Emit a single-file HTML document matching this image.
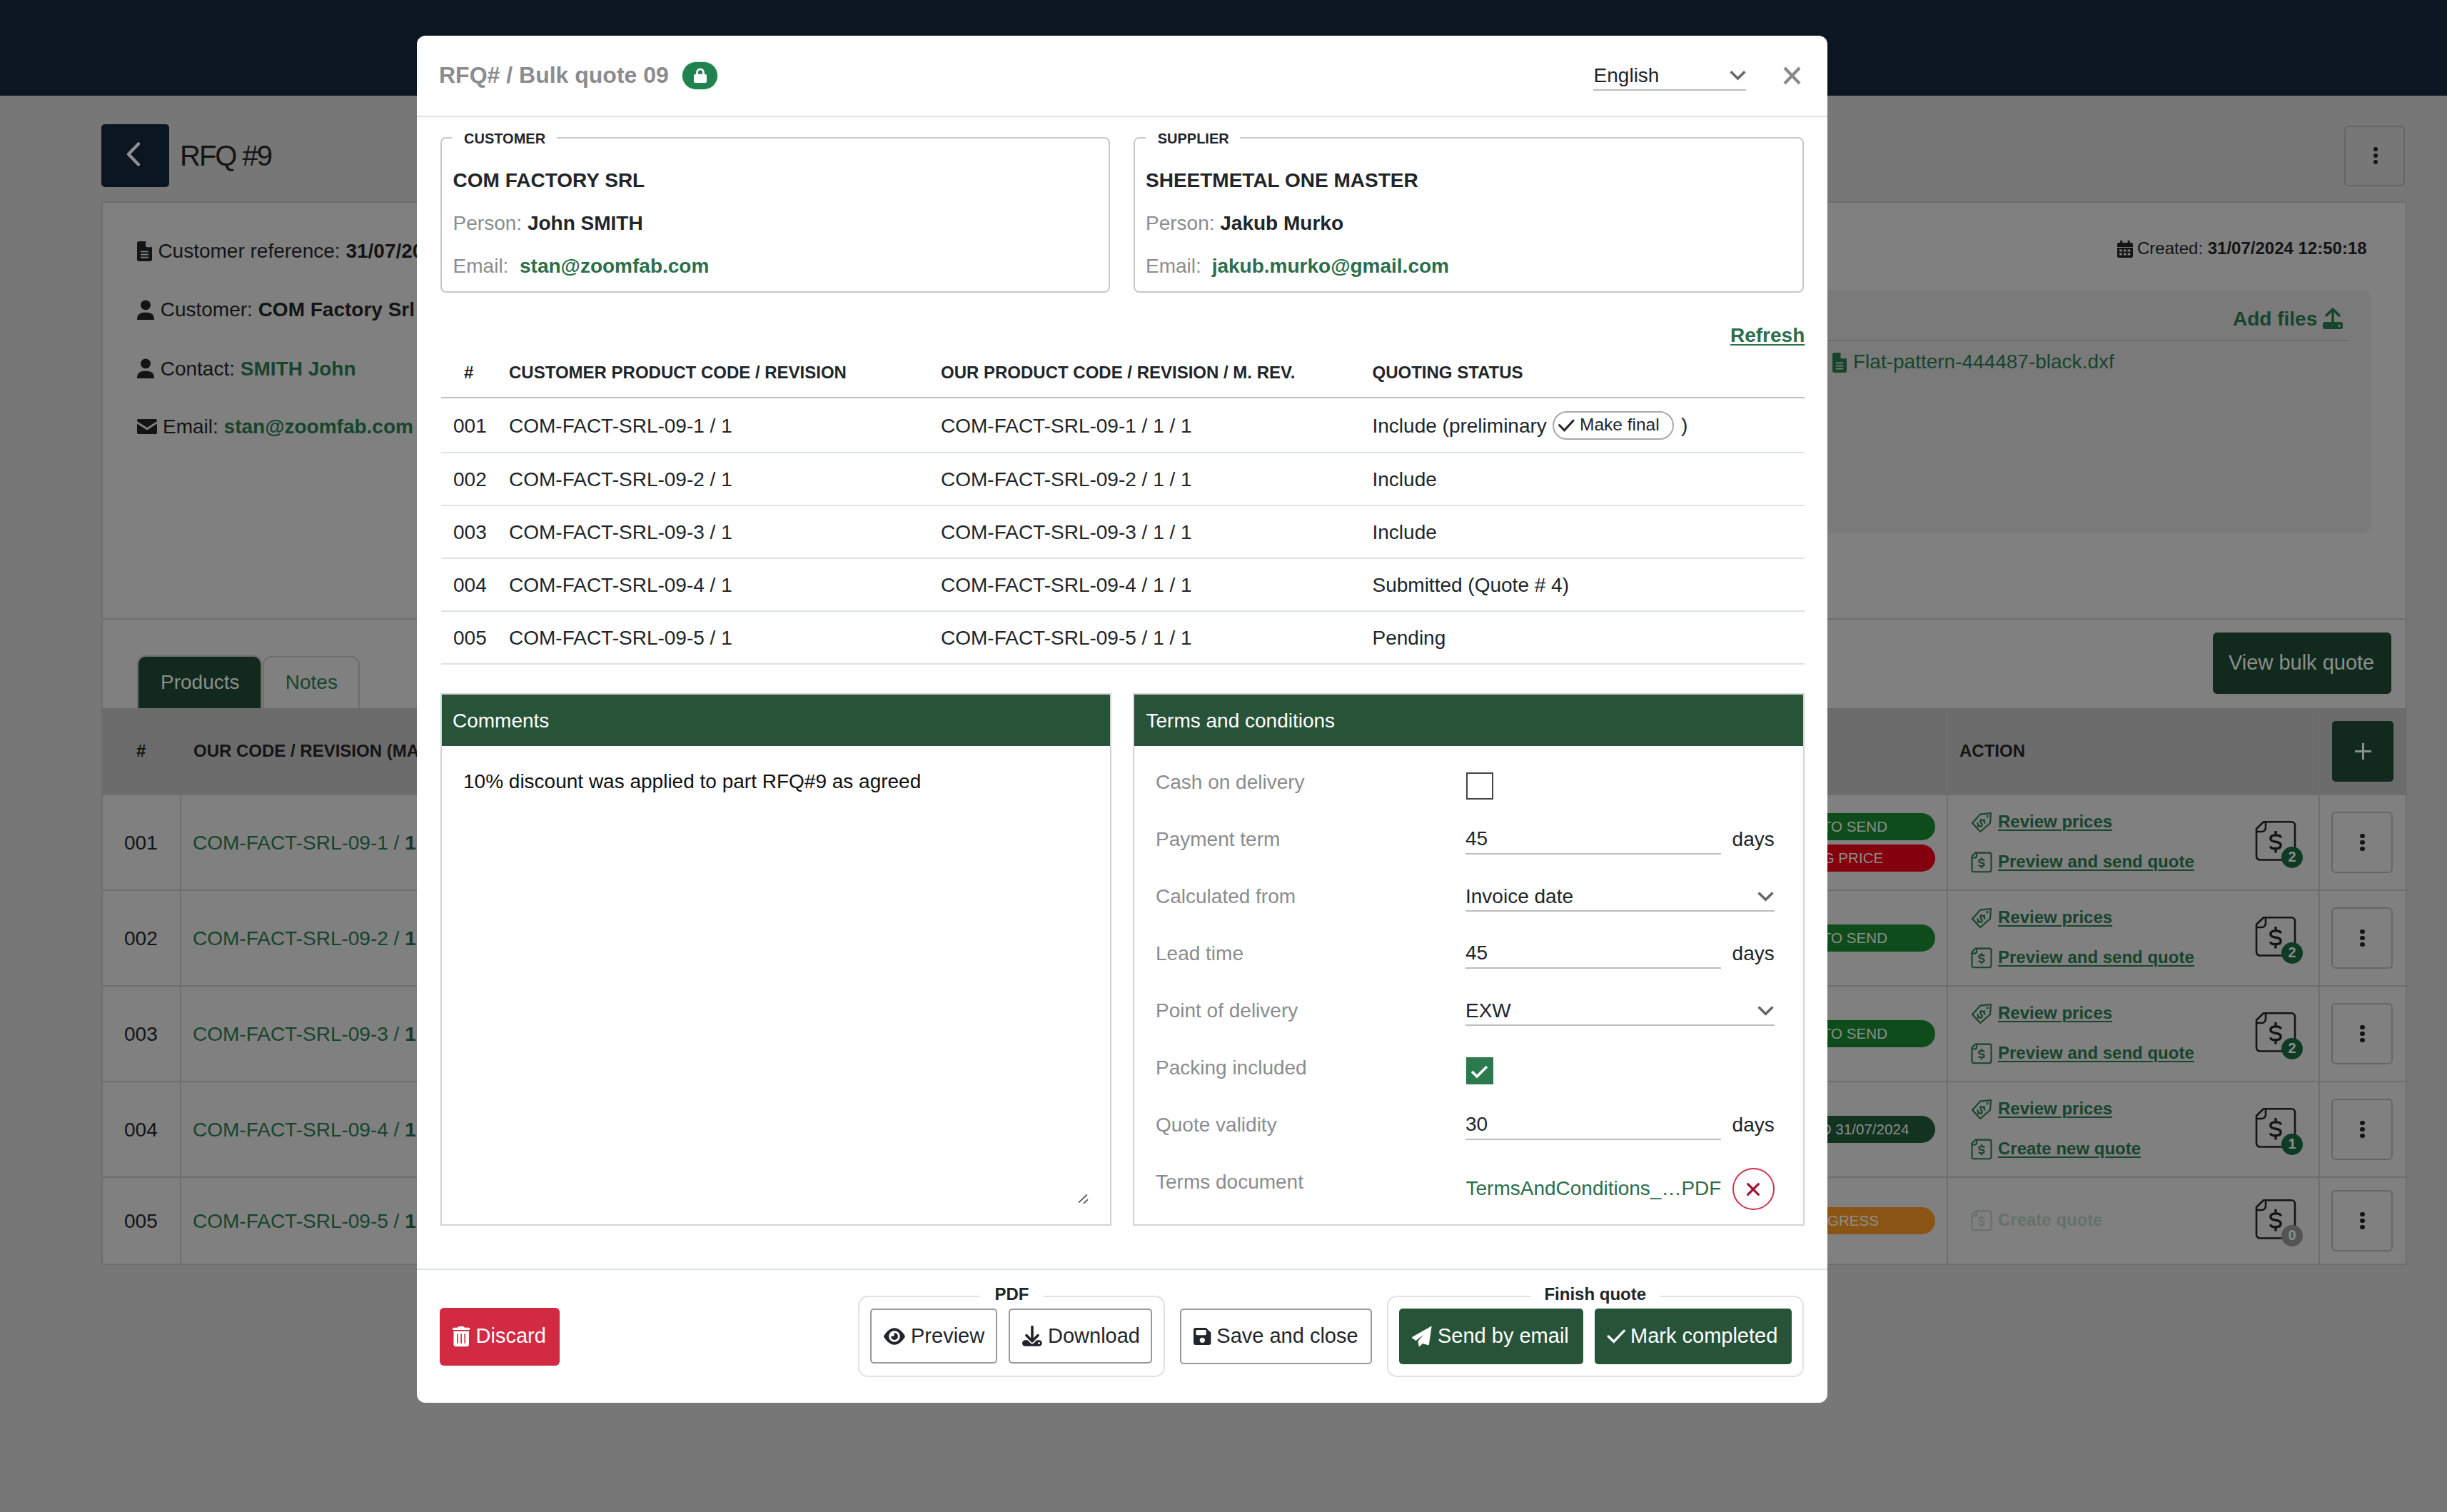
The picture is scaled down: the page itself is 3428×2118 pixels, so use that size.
<!DOCTYPE html><html><head><meta charset="utf-8"><title>RFQ Bulk quote</title><style>
html,body{margin:0;padding:0;}
body{width:3428px;height:2118px;overflow:hidden;position:relative;background:#777777;font-family:"Liberation Sans",sans-serif;}
.t{position:absolute;white-space:nowrap;line-height:1;}
.b{position:absolute;box-sizing:border-box;}
svg.b{overflow:visible;}
u{text-decoration:underline;text-underline-offset:3px;text-decoration-thickness:2px;}
</style></head><body>

<div class="b" style="left:0.0px;top:0.0px;width:3428.0px;height:134.0px;background:#0b1620;"></div>
<div class="b" style="left:142.0px;top:174.0px;width:95.0px;height:88.0px;background:#0b1620;border-radius:5px;"></div>
<svg class="b" style="left:172.0px;top:196.0px;width:30.0px;height:40.0px;" viewBox="0 0 30 40" preserveAspectRatio="none"><polyline points="22,5.5 8,20 22,34.5" fill="none" stroke="#8c8f93" stroke-width="4.5" stroke-linecap="round" stroke-linejoin="round"/></svg>
<div class="t" style="left:252.0px;top:197.9px;font-size:40px;color:#141414;letter-spacing:-2px;">RFQ #9</div>
<div class="b" style="left:3284.0px;top:175.5px;width:85.0px;height:85.5px;border:2px solid #666;border-radius:6px;"></div>
<div class="b" style="left:3324.5px;top:205.8px;width:6.4px;height:6.4px;background:#141414;border-radius:50%;"></div>
<div class="b" style="left:3324.5px;top:214.8px;width:6.4px;height:6.4px;background:#141414;border-radius:50%;"></div>
<div class="b" style="left:3324.5px;top:223.8px;width:6.4px;height:6.4px;background:#141414;border-radius:50%;"></div>
<div class="b" style="left:142.0px;top:282.0px;width:3230.0px;height:1490.0px;background:#808080;border:2px solid #6e6e6e;"></div>
<div class="b" style="left:143.0px;top:866.0px;width:3228.0px;height:2.0px;background:#6e6e6e;"></div>
<svg class="b" style="left:192.0px;top:338.0px;width:21.0px;height:28.0px;" viewBox="0 0 21 31" preserveAspectRatio="none"><path d="M0 3a3 3 0 0 1 3-3h9l9 9v19a3 3 0 0 1-3 3H3a3 3 0 0 1-3-3z" fill="#141414"/><path d="M12 0v7a2 2 0 0 0 2 2h7z" fill="#808080"/><rect x="5" y="15" width="11" height="2" fill="#808080"/><rect x="5" y="19.5" width="11" height="2" fill="#808080"/><rect x="5" y="24" width="11" height="2" fill="#808080"/></svg>
<div class="t" style="left:221.4px;top:338.2px;font-size:28px;color:#141414;">Customer reference: <b>31/07/2024 REF</b></div>
<svg class="b" style="left:192.0px;top:420.0px;width:24.0px;height:28.0px;" viewBox="0 0 24 28.5" preserveAspectRatio="none"><circle cx="12" cy="7.5" r="7" fill="#141414"/><path d="M0 27a9 9 0 0 1 9-9h6a9 9 0 0 1 9 9v1.5h-24z" fill="#141414"/></svg>
<div class="t" style="left:224.7px;top:420.2px;font-size:28px;color:#141414;">Customer: <b>COM Factory Srl</b></div>
<svg class="b" style="left:192.0px;top:502.0px;width:24.0px;height:28.0px;" viewBox="0 0 24 28.5" preserveAspectRatio="none"><circle cx="12" cy="7.5" r="7" fill="#141414"/><path d="M0 27a9 9 0 0 1 9-9h6a9 9 0 0 1 9 9v1.5h-24z" fill="#141414"/></svg>
<div class="t" style="left:224.7px;top:502.6px;font-size:28px;color:#141414;">Contact: <b style="color:#17442d">SMITH John</b></div>
<svg class="b" style="left:192.0px;top:587.0px;width:28.0px;height:21.0px;" viewBox="0 0 28 21" preserveAspectRatio="none"><path d="M2 0h24a2 2 0 0 1 2 2v1L14 12 0 3V2a2 2 0 0 1 2-2z" fill="#141414"/><path d="M0 6.5l14 9 14-9V19a2 2 0 0 1-2 2H2a2 2 0 0 1-2-2z" fill="#141414"/></svg>
<div class="t" style="left:228.0px;top:583.7px;font-size:28px;color:#141414;">Email: <b style="color:#17442d">stan@zoomfab.com</b></div>
<svg class="b" style="left:2966.0px;top:337.0px;width:22.0px;height:24.0px;" viewBox="0 0 21 24" preserveAspectRatio="none"><rect x="4" y="0" width="3" height="5" fill="#141414"/><rect x="14" y="0" width="3" height="5" fill="#141414"/><path d="M0 5a2 2 0 0 1 2-2h17a2 2 0 0 1 2 2v4H0z" fill="#141414"/><path d="M0 10h21v12a2 2 0 0 1-2 2H2a2 2 0 0 1-2-2z" fill="#141414"/><rect x="3.0" y="12.5" width="3.5" height="3" fill="#808080"/><rect x="3.0" y="17.5" width="3.5" height="3" fill="#808080"/><rect x="8.5" y="12.5" width="3.5" height="3" fill="#808080"/><rect x="8.5" y="17.5" width="3.5" height="3" fill="#808080"/><rect x="14.0" y="12.5" width="3.5" height="3" fill="#808080"/><rect x="14.0" y="17.5" width="3.5" height="3" fill="#808080"/></svg>
<div class="t" style="left:2994.0px;top:336.1px;font-size:24px;color:#141414;">Created: <b>31/07/2024 12:50:18</b></div>
<div class="b" style="left:2300.0px;top:406.0px;width:1021.0px;height:341.0px;background:#7a7a7a;border-radius:10px;"></div>
<div class="t" style="left:3128.0px;top:433.1px;font-size:28px;color:#17442d;font-weight:bold;">Add files</div>
<svg class="b" style="left:3254.0px;top:432.0px;width:28.0px;height:29.0px;" viewBox="0 0 28 29" preserveAspectRatio="none"><path d="M14 1 L5 10 M14 1 L23 10 M14 1 V21" stroke="#17442d" stroke-width="3.5" fill="none" stroke-linecap="round" stroke-linejoin="round"/><path d="M0 22a3 3 0 0 1 3-3h22a3 3 0 0 1 3 3v4a3 3 0 0 1-3 3H3a3 3 0 0 1-3-3z" fill="#17442d"/><circle cx="23" cy="24.5" r="1.8" fill="#7a7a7a"/></svg>
<div class="b" style="left:2340.0px;top:476.0px;width:951.0px;height:2.0px;background:#6b6b6b;"></div>
<svg class="b" style="left:2567.0px;top:494.0px;width:20.0px;height:28.0px;" viewBox="0 0 21 31" preserveAspectRatio="none"><path d="M0 3a3 3 0 0 1 3-3h9l9 9v19a3 3 0 0 1-3 3H3a3 3 0 0 1-3-3z" fill="#17442d"/><path d="M12 0v7a2 2 0 0 0 2 2h7z" fill="#7a7a7a"/><rect x="5" y="15" width="11" height="2" fill="#7a7a7a"/><rect x="5" y="19.5" width="11" height="2" fill="#7a7a7a"/><rect x="5" y="24" width="11" height="2" fill="#7a7a7a"/></svg>
<div class="t" style="left:2596.0px;top:492.6px;font-size:28px;color:#17442d;">Flat-pattern-444487-black.dxf</div>
<div class="b" style="left:192.0px;top:918.0px;width:175.0px;height:74.0px;border:2px solid #6e6e6e;border-bottom:none;border-radius:12px 12px 0 0;"></div>
<div class="b" style="left:194.0px;top:920.0px;width:171.0px;height:72.0px;background:#12291e;border-radius:10px 10px 0 0;"></div>
<div class="t" style="left:225.0px;top:942.3px;font-size:28px;color:#8a8f8c;">Products</div>
<div class="b" style="left:368.0px;top:918.6px;width:136.0px;height:73.4px;border:2px solid #6e6e6e;border-bottom:none;border-radius:12px 12px 0 0;"></div>
<div class="t" style="left:399.8px;top:942.3px;font-size:28px;color:#17442d;">Notes</div>
<div class="b" style="left:143.0px;top:992.0px;width:3228.0px;height:121.0px;background:#6c6c6c;"></div>
<div class="b" style="left:143.0px;top:1112.0px;width:3228.0px;height:2.0px;background:#6e6e6e;"></div>
<div class="b" style="left:143.0px;top:1246.0px;width:3228.0px;height:2.0px;background:#6e6e6e;"></div>
<div class="b" style="left:143.0px;top:1380.0px;width:3228.0px;height:2.0px;background:#6e6e6e;"></div>
<div class="b" style="left:143.0px;top:1514.0px;width:3228.0px;height:2.0px;background:#6e6e6e;"></div>
<div class="b" style="left:143.0px;top:1648.0px;width:3228.0px;height:2.0px;background:#6e6e6e;"></div>
<div class="b" style="left:252.0px;top:992.0px;width:2.0px;height:779.0px;background:#6e6e6e;"></div>
<div class="b" style="left:2727.0px;top:992.0px;width:2.0px;height:779.0px;background:#6e6e6e;"></div>
<div class="b" style="left:3248.0px;top:992.0px;width:2.0px;height:779.0px;background:#6e6e6e;"></div>
<div class="t" style="left:191.0px;top:1040.0px;font-size:24px;color:#141414;font-weight:bold;">#</div>
<div class="t" style="left:271.0px;top:1040.0px;font-size:24px;color:#141414;font-weight:bold;">OUR CODE / REVISION (MACHINE REVISION)</div>
<div class="t" style="left:2745.0px;top:1040.0px;font-size:24px;color:#141414;font-weight:bold;">ACTION</div>
<div class="b" style="left:3267.0px;top:1010.0px;width:86.0px;height:85.0px;background:#12291e;border-radius:5px;"></div>
<div class="b" style="left:3298.5px;top:1050.5px;width:23.0px;height:3.0px;background:#8a8f8c;"></div>
<div class="b" style="left:3308.5px;top:1040.5px;width:3.0px;height:23.0px;background:#8a8f8c;"></div>
<div class="b" style="left:3100.0px;top:886.0px;width:250.0px;height:86.0px;background:#12291e;border-radius:6px;"></div>
<div class="t" style="left:3122.0px;top:913.8px;font-size:29px;color:#8a8f8c;">View bulk quote</div>
<div class="t" style="left:174.0px;top:1166.7px;font-size:28px;color:#141414;">001</div>
<div class="t" style="left:270.0px;top:1166.7px;font-size:28px;color:#17442d;">COM-FACT-SRL-09-1 / <b style="color:#173a27">1</b></div>
<div class="b" style="left:2410.0px;top:1139.0px;width:301.0px;height:38.0px;background:#0f4c1b;border-radius:19px;"></div>
<div class="t" style="left:2410px;width:301px;top:1147.5px;font-size:20.6px;color:#8a8f8c;text-align:center;">READY TO SEND</div>
<div class="b" style="left:2410.0px;top:1183.0px;width:301.0px;height:38.0px;background:#85000f;border-radius:19px;"></div>
<div class="t" style="left:2410px;width:301px;top:1191.5px;font-size:20.6px;color:#8a8f8c;text-align:center;">MISSING PRICE</div>
<svg class="b" style="left:2762.0px;top:1138.0px;width:28.0px;height:28.0px;" viewBox="0 0 28 28" preserveAspectRatio="none"><path d="M1 15 L12.2 2.6 L27 1 L26 15 L12.2 27 Z" fill="none" stroke="#17442d" stroke-width="2.1" stroke-linejoin="round"/><circle cx="22.1" cy="5.6" r="1.3" fill="none" stroke="#17442d" stroke-width="1.1"/><g transform="rotate(45 13.5 15)"><path d="M17.02 12.12 C17.02 10.81 15.26 10.35 13.50 10.35 C11.38 10.35 9.97 11.05 9.97 12.68 C9.97 14.30 11.74 14.77 13.50 15.00 C15.26 15.23 17.02 15.70 17.02 17.32 C17.02 18.95 15.62 19.65 13.50 19.65 C11.74 19.65 9.97 19.19 9.97 17.88 M13.50 7.50 V10.35 M13.50 19.65 V22.50" fill="none" stroke="#17442d" stroke-width="2.1"/></g></svg>
<div class="t" style="left:2799.0px;top:1139.0px;font-size:24px;color:#17442d;font-weight:bold;"><u>Review prices</u></div>
<svg class="b" style="left:2762.0px;top:1194.0px;width:28.0px;height:28.0px;" viewBox="0 0 56 56" preserveAspectRatio="none"><path d="M11 1.2 H50 a5 5 0 0 1 5 5 V49.5 a5 5 0 0 1 -5 5 H6 a5 5 0 0 1 -5 -5 V11 Z" fill="none" stroke="#17442d" stroke-width="4.2" stroke-linejoin="round"/><path d="M1.5 15 H8.5 a5.5 5.5 0 0 0 5.5 -5.5 V1.5" fill="none" stroke="#17442d" stroke-width="4.2"/><path d="M35.17 23.44 C35.17 20.79 31.58 19.84 28.00 19.84 C23.70 19.84 20.83 21.26 20.83 24.57 C20.83 27.88 24.42 28.83 28.00 29.30 C31.58 29.77 35.17 30.72 35.17 34.03 C35.17 37.34 32.30 38.76 28.00 38.76 C24.42 38.76 20.83 37.81 20.83 35.16 M28.00 14.05 V19.84 M28.00 38.76 V44.55" fill="none" stroke="#17442d" stroke-width="4.4" stroke-linecap="butt"/></svg>
<div class="t" style="left:2799.0px;top:1194.5px;font-size:24px;color:#17442d;font-weight:bold;"><u>Preview and send quote</u></div>
<svg class="b" style="left:3160.0px;top:1150.0px;width:56.0px;height:56.0px;" viewBox="0 0 56 56" preserveAspectRatio="none"><path d="M11 1.2 H50 a5 5 0 0 1 5 5 V49.5 a5 5 0 0 1 -5 5 H6 a5 5 0 0 1 -5 -5 V11 Z" fill="none" stroke="#141414" stroke-width="2.6" stroke-linejoin="round"/><path d="M1.5 15 H8.5 a5.5 5.5 0 0 0 5.5 -5.5 V1.5" fill="none" stroke="#141414" stroke-width="2.6"/><path d="M35.17 23.44 C35.17 20.79 31.58 19.84 28.00 19.84 C23.70 19.84 20.83 21.26 20.83 24.57 C20.83 27.88 24.42 28.83 28.00 29.30 C31.58 29.77 35.17 30.72 35.17 34.03 C35.17 37.34 32.30 38.76 28.00 38.76 C24.42 38.76 20.83 37.81 20.83 35.16 M28.00 14.05 V19.84 M28.00 38.76 V44.55" fill="none" stroke="#141414" stroke-width="3.4" stroke-linecap="butt"/></svg>
<div class="b" style="left:3196.0px;top:1186.0px;width:30.0px;height:30.0px;background:#0f3a24;border-radius:50%;"></div>
<div class="t" style="left:3196px;width:30px;top:1190.0px;font-size:20px;font-weight:bold;color:#8a8f8c;text-align:center;">2</div>
<div class="b" style="left:3266.0px;top:1136.5px;width:86.0px;height:86.0px;border:2px solid #666;border-radius:6px;"></div>
<div class="b" style="left:3306.2px;top:1167.8px;width:6.4px;height:6.4px;background:#141414;border-radius:50%;"></div>
<div class="b" style="left:3306.2px;top:1176.8px;width:6.4px;height:6.4px;background:#141414;border-radius:50%;"></div>
<div class="b" style="left:3306.2px;top:1185.8px;width:6.4px;height:6.4px;background:#141414;border-radius:50%;"></div>
<div class="t" style="left:174.0px;top:1300.7px;font-size:28px;color:#141414;">002</div>
<div class="t" style="left:270.0px;top:1300.7px;font-size:28px;color:#17442d;">COM-FACT-SRL-09-2 / <b style="color:#173a27">1</b></div>
<div class="b" style="left:2410.0px;top:1295.0px;width:301.0px;height:38.0px;background:#0f4c1b;border-radius:19px;"></div>
<div class="t" style="left:2410px;width:301px;top:1303.5px;font-size:20.6px;color:#8a8f8c;text-align:center;">READY TO SEND</div>
<svg class="b" style="left:2762.0px;top:1272.0px;width:28.0px;height:28.0px;" viewBox="0 0 28 28" preserveAspectRatio="none"><path d="M1 15 L12.2 2.6 L27 1 L26 15 L12.2 27 Z" fill="none" stroke="#17442d" stroke-width="2.1" stroke-linejoin="round"/><circle cx="22.1" cy="5.6" r="1.3" fill="none" stroke="#17442d" stroke-width="1.1"/><g transform="rotate(45 13.5 15)"><path d="M17.02 12.12 C17.02 10.81 15.26 10.35 13.50 10.35 C11.38 10.35 9.97 11.05 9.97 12.68 C9.97 14.30 11.74 14.77 13.50 15.00 C15.26 15.23 17.02 15.70 17.02 17.32 C17.02 18.95 15.62 19.65 13.50 19.65 C11.74 19.65 9.97 19.19 9.97 17.88 M13.50 7.50 V10.35 M13.50 19.65 V22.50" fill="none" stroke="#17442d" stroke-width="2.1"/></g></svg>
<div class="t" style="left:2799.0px;top:1273.0px;font-size:24px;color:#17442d;font-weight:bold;"><u>Review prices</u></div>
<svg class="b" style="left:2762.0px;top:1328.0px;width:28.0px;height:28.0px;" viewBox="0 0 56 56" preserveAspectRatio="none"><path d="M11 1.2 H50 a5 5 0 0 1 5 5 V49.5 a5 5 0 0 1 -5 5 H6 a5 5 0 0 1 -5 -5 V11 Z" fill="none" stroke="#17442d" stroke-width="4.2" stroke-linejoin="round"/><path d="M1.5 15 H8.5 a5.5 5.5 0 0 0 5.5 -5.5 V1.5" fill="none" stroke="#17442d" stroke-width="4.2"/><path d="M35.17 23.44 C35.17 20.79 31.58 19.84 28.00 19.84 C23.70 19.84 20.83 21.26 20.83 24.57 C20.83 27.88 24.42 28.83 28.00 29.30 C31.58 29.77 35.17 30.72 35.17 34.03 C35.17 37.34 32.30 38.76 28.00 38.76 C24.42 38.76 20.83 37.81 20.83 35.16 M28.00 14.05 V19.84 M28.00 38.76 V44.55" fill="none" stroke="#17442d" stroke-width="4.4" stroke-linecap="butt"/></svg>
<div class="t" style="left:2799.0px;top:1328.5px;font-size:24px;color:#17442d;font-weight:bold;"><u>Preview and send quote</u></div>
<svg class="b" style="left:3160.0px;top:1284.0px;width:56.0px;height:56.0px;" viewBox="0 0 56 56" preserveAspectRatio="none"><path d="M11 1.2 H50 a5 5 0 0 1 5 5 V49.5 a5 5 0 0 1 -5 5 H6 a5 5 0 0 1 -5 -5 V11 Z" fill="none" stroke="#141414" stroke-width="2.6" stroke-linejoin="round"/><path d="M1.5 15 H8.5 a5.5 5.5 0 0 0 5.5 -5.5 V1.5" fill="none" stroke="#141414" stroke-width="2.6"/><path d="M35.17 23.44 C35.17 20.79 31.58 19.84 28.00 19.84 C23.70 19.84 20.83 21.26 20.83 24.57 C20.83 27.88 24.42 28.83 28.00 29.30 C31.58 29.77 35.17 30.72 35.17 34.03 C35.17 37.34 32.30 38.76 28.00 38.76 C24.42 38.76 20.83 37.81 20.83 35.16 M28.00 14.05 V19.84 M28.00 38.76 V44.55" fill="none" stroke="#141414" stroke-width="3.4" stroke-linecap="butt"/></svg>
<div class="b" style="left:3196.0px;top:1320.0px;width:30.0px;height:30.0px;background:#0f3a24;border-radius:50%;"></div>
<div class="t" style="left:3196px;width:30px;top:1324.0px;font-size:20px;font-weight:bold;color:#8a8f8c;text-align:center;">2</div>
<div class="b" style="left:3266.0px;top:1270.5px;width:86.0px;height:86.0px;border:2px solid #666;border-radius:6px;"></div>
<div class="b" style="left:3306.2px;top:1301.8px;width:6.4px;height:6.4px;background:#141414;border-radius:50%;"></div>
<div class="b" style="left:3306.2px;top:1310.8px;width:6.4px;height:6.4px;background:#141414;border-radius:50%;"></div>
<div class="b" style="left:3306.2px;top:1319.8px;width:6.4px;height:6.4px;background:#141414;border-radius:50%;"></div>
<div class="t" style="left:174.0px;top:1434.7px;font-size:28px;color:#141414;">003</div>
<div class="t" style="left:270.0px;top:1434.7px;font-size:28px;color:#17442d;">COM-FACT-SRL-09-3 / <b style="color:#173a27">1</b></div>
<div class="b" style="left:2410.0px;top:1429.0px;width:301.0px;height:38.0px;background:#0f4c1b;border-radius:19px;"></div>
<div class="t" style="left:2410px;width:301px;top:1437.5px;font-size:20.6px;color:#8a8f8c;text-align:center;">READY TO SEND</div>
<svg class="b" style="left:2762.0px;top:1406.0px;width:28.0px;height:28.0px;" viewBox="0 0 28 28" preserveAspectRatio="none"><path d="M1 15 L12.2 2.6 L27 1 L26 15 L12.2 27 Z" fill="none" stroke="#17442d" stroke-width="2.1" stroke-linejoin="round"/><circle cx="22.1" cy="5.6" r="1.3" fill="none" stroke="#17442d" stroke-width="1.1"/><g transform="rotate(45 13.5 15)"><path d="M17.02 12.12 C17.02 10.81 15.26 10.35 13.50 10.35 C11.38 10.35 9.97 11.05 9.97 12.68 C9.97 14.30 11.74 14.77 13.50 15.00 C15.26 15.23 17.02 15.70 17.02 17.32 C17.02 18.95 15.62 19.65 13.50 19.65 C11.74 19.65 9.97 19.19 9.97 17.88 M13.50 7.50 V10.35 M13.50 19.65 V22.50" fill="none" stroke="#17442d" stroke-width="2.1"/></g></svg>
<div class="t" style="left:2799.0px;top:1407.0px;font-size:24px;color:#17442d;font-weight:bold;"><u>Review prices</u></div>
<svg class="b" style="left:2762.0px;top:1462.0px;width:28.0px;height:28.0px;" viewBox="0 0 56 56" preserveAspectRatio="none"><path d="M11 1.2 H50 a5 5 0 0 1 5 5 V49.5 a5 5 0 0 1 -5 5 H6 a5 5 0 0 1 -5 -5 V11 Z" fill="none" stroke="#17442d" stroke-width="4.2" stroke-linejoin="round"/><path d="M1.5 15 H8.5 a5.5 5.5 0 0 0 5.5 -5.5 V1.5" fill="none" stroke="#17442d" stroke-width="4.2"/><path d="M35.17 23.44 C35.17 20.79 31.58 19.84 28.00 19.84 C23.70 19.84 20.83 21.26 20.83 24.57 C20.83 27.88 24.42 28.83 28.00 29.30 C31.58 29.77 35.17 30.72 35.17 34.03 C35.17 37.34 32.30 38.76 28.00 38.76 C24.42 38.76 20.83 37.81 20.83 35.16 M28.00 14.05 V19.84 M28.00 38.76 V44.55" fill="none" stroke="#17442d" stroke-width="4.4" stroke-linecap="butt"/></svg>
<div class="t" style="left:2799.0px;top:1462.5px;font-size:24px;color:#17442d;font-weight:bold;"><u>Preview and send quote</u></div>
<svg class="b" style="left:3160.0px;top:1418.0px;width:56.0px;height:56.0px;" viewBox="0 0 56 56" preserveAspectRatio="none"><path d="M11 1.2 H50 a5 5 0 0 1 5 5 V49.5 a5 5 0 0 1 -5 5 H6 a5 5 0 0 1 -5 -5 V11 Z" fill="none" stroke="#141414" stroke-width="2.6" stroke-linejoin="round"/><path d="M1.5 15 H8.5 a5.5 5.5 0 0 0 5.5 -5.5 V1.5" fill="none" stroke="#141414" stroke-width="2.6"/><path d="M35.17 23.44 C35.17 20.79 31.58 19.84 28.00 19.84 C23.70 19.84 20.83 21.26 20.83 24.57 C20.83 27.88 24.42 28.83 28.00 29.30 C31.58 29.77 35.17 30.72 35.17 34.03 C35.17 37.34 32.30 38.76 28.00 38.76 C24.42 38.76 20.83 37.81 20.83 35.16 M28.00 14.05 V19.84 M28.00 38.76 V44.55" fill="none" stroke="#141414" stroke-width="3.4" stroke-linecap="butt"/></svg>
<div class="b" style="left:3196.0px;top:1454.0px;width:30.0px;height:30.0px;background:#0f3a24;border-radius:50%;"></div>
<div class="t" style="left:3196px;width:30px;top:1458.0px;font-size:20px;font-weight:bold;color:#8a8f8c;text-align:center;">2</div>
<div class="b" style="left:3266.0px;top:1404.5px;width:86.0px;height:86.0px;border:2px solid #666;border-radius:6px;"></div>
<div class="b" style="left:3306.2px;top:1435.8px;width:6.4px;height:6.4px;background:#141414;border-radius:50%;"></div>
<div class="b" style="left:3306.2px;top:1444.8px;width:6.4px;height:6.4px;background:#141414;border-radius:50%;"></div>
<div class="b" style="left:3306.2px;top:1453.8px;width:6.4px;height:6.4px;background:#141414;border-radius:50%;"></div>
<div class="t" style="left:174.0px;top:1568.7px;font-size:28px;color:#141414;">004</div>
<div class="t" style="left:270.0px;top:1568.7px;font-size:28px;color:#17442d;">COM-FACT-SRL-09-4 / <b style="color:#173a27">1</b></div>
<div class="b" style="left:2410.0px;top:1563.0px;width:301.0px;height:38.0px;background:#133321;border-radius:19px;"></div>
<div class="t" style="left:2410px;width:301px;top:1571.5px;font-size:20.6px;color:#8a8f8c;text-align:center;">SUBMITTED 31/07/2024</div>
<svg class="b" style="left:2762.0px;top:1540.0px;width:28.0px;height:28.0px;" viewBox="0 0 28 28" preserveAspectRatio="none"><path d="M1 15 L12.2 2.6 L27 1 L26 15 L12.2 27 Z" fill="none" stroke="#17442d" stroke-width="2.1" stroke-linejoin="round"/><circle cx="22.1" cy="5.6" r="1.3" fill="none" stroke="#17442d" stroke-width="1.1"/><g transform="rotate(45 13.5 15)"><path d="M17.02 12.12 C17.02 10.81 15.26 10.35 13.50 10.35 C11.38 10.35 9.97 11.05 9.97 12.68 C9.97 14.30 11.74 14.77 13.50 15.00 C15.26 15.23 17.02 15.70 17.02 17.32 C17.02 18.95 15.62 19.65 13.50 19.65 C11.74 19.65 9.97 19.19 9.97 17.88 M13.50 7.50 V10.35 M13.50 19.65 V22.50" fill="none" stroke="#17442d" stroke-width="2.1"/></g></svg>
<div class="t" style="left:2799.0px;top:1541.0px;font-size:24px;color:#17442d;font-weight:bold;"><u>Review prices</u></div>
<svg class="b" style="left:2762.0px;top:1596.0px;width:28.0px;height:28.0px;" viewBox="0 0 56 56" preserveAspectRatio="none"><path d="M11 1.2 H50 a5 5 0 0 1 5 5 V49.5 a5 5 0 0 1 -5 5 H6 a5 5 0 0 1 -5 -5 V11 Z" fill="none" stroke="#17442d" stroke-width="4.2" stroke-linejoin="round"/><path d="M1.5 15 H8.5 a5.5 5.5 0 0 0 5.5 -5.5 V1.5" fill="none" stroke="#17442d" stroke-width="4.2"/><path d="M35.17 23.44 C35.17 20.79 31.58 19.84 28.00 19.84 C23.70 19.84 20.83 21.26 20.83 24.57 C20.83 27.88 24.42 28.83 28.00 29.30 C31.58 29.77 35.17 30.72 35.17 34.03 C35.17 37.34 32.30 38.76 28.00 38.76 C24.42 38.76 20.83 37.81 20.83 35.16 M28.00 14.05 V19.84 M28.00 38.76 V44.55" fill="none" stroke="#17442d" stroke-width="4.4" stroke-linecap="butt"/></svg>
<div class="t" style="left:2799.0px;top:1596.5px;font-size:24px;color:#17442d;font-weight:bold;"><u>Create new quote</u></div>
<svg class="b" style="left:3160.0px;top:1552.0px;width:56.0px;height:56.0px;" viewBox="0 0 56 56" preserveAspectRatio="none"><path d="M11 1.2 H50 a5 5 0 0 1 5 5 V49.5 a5 5 0 0 1 -5 5 H6 a5 5 0 0 1 -5 -5 V11 Z" fill="none" stroke="#141414" stroke-width="2.6" stroke-linejoin="round"/><path d="M1.5 15 H8.5 a5.5 5.5 0 0 0 5.5 -5.5 V1.5" fill="none" stroke="#141414" stroke-width="2.6"/><path d="M35.17 23.44 C35.17 20.79 31.58 19.84 28.00 19.84 C23.70 19.84 20.83 21.26 20.83 24.57 C20.83 27.88 24.42 28.83 28.00 29.30 C31.58 29.77 35.17 30.72 35.17 34.03 C35.17 37.34 32.30 38.76 28.00 38.76 C24.42 38.76 20.83 37.81 20.83 35.16 M28.00 14.05 V19.84 M28.00 38.76 V44.55" fill="none" stroke="#141414" stroke-width="3.4" stroke-linecap="butt"/></svg>
<div class="b" style="left:3196.0px;top:1588.0px;width:30.0px;height:30.0px;background:#0f3a24;border-radius:50%;"></div>
<div class="t" style="left:3196px;width:30px;top:1592.0px;font-size:20px;font-weight:bold;color:#8a8f8c;text-align:center;">1</div>
<div class="b" style="left:3266.0px;top:1538.5px;width:86.0px;height:86.0px;border:2px solid #666;border-radius:6px;"></div>
<div class="b" style="left:3306.2px;top:1569.8px;width:6.4px;height:6.4px;background:#141414;border-radius:50%;"></div>
<div class="b" style="left:3306.2px;top:1578.8px;width:6.4px;height:6.4px;background:#141414;border-radius:50%;"></div>
<div class="b" style="left:3306.2px;top:1587.8px;width:6.4px;height:6.4px;background:#141414;border-radius:50%;"></div>
<div class="t" style="left:174.0px;top:1696.7px;font-size:28px;color:#141414;">005</div>
<div class="t" style="left:270.0px;top:1696.7px;font-size:28px;color:#17442d;">COM-FACT-SRL-09-5 / <b style="color:#173a27">1</b></div>
<div class="b" style="left:2410.0px;top:1691.0px;width:301.0px;height:38.0px;background:#8a5514;border-radius:19px;"></div>
<div class="t" style="left:2410px;width:301px;top:1699.5px;font-size:20.6px;color:#8a8f8c;text-align:center;">IN PROGRESS</div>
<svg class="b" style="left:2762.0px;top:1696.0px;width:28.0px;height:28.0px;" viewBox="0 0 56 56" preserveAspectRatio="none"><path d="M11 1.2 H50 a5 5 0 0 1 5 5 V49.5 a5 5 0 0 1 -5 5 H6 a5 5 0 0 1 -5 -5 V11 Z" fill="none" stroke="#65716b" stroke-width="4.2" stroke-linejoin="round"/><path d="M1.5 15 H8.5 a5.5 5.5 0 0 0 5.5 -5.5 V1.5" fill="none" stroke="#65716b" stroke-width="4.2"/><path d="M35.17 23.44 C35.17 20.79 31.58 19.84 28.00 19.84 C23.70 19.84 20.83 21.26 20.83 24.57 C20.83 27.88 24.42 28.83 28.00 29.30 C31.58 29.77 35.17 30.72 35.17 34.03 C35.17 37.34 32.30 38.76 28.00 38.76 C24.42 38.76 20.83 37.81 20.83 35.16 M28.00 14.05 V19.84 M28.00 38.76 V44.55" fill="none" stroke="#65716b" stroke-width="4.4" stroke-linecap="butt"/></svg>
<div class="t" style="left:2799.0px;top:1697.0px;font-size:24px;color:#65716b;font-weight:bold;">Create quote</div>
<svg class="b" style="left:3160.0px;top:1680.0px;width:56.0px;height:56.0px;" viewBox="0 0 56 56" preserveAspectRatio="none"><path d="M11 1.2 H50 a5 5 0 0 1 5 5 V49.5 a5 5 0 0 1 -5 5 H6 a5 5 0 0 1 -5 -5 V11 Z" fill="none" stroke="#141414" stroke-width="2.6" stroke-linejoin="round"/><path d="M1.5 15 H8.5 a5.5 5.5 0 0 0 5.5 -5.5 V1.5" fill="none" stroke="#141414" stroke-width="2.6"/><path d="M35.17 23.44 C35.17 20.79 31.58 19.84 28.00 19.84 C23.70 19.84 20.83 21.26 20.83 24.57 C20.83 27.88 24.42 28.83 28.00 29.30 C31.58 29.77 35.17 30.72 35.17 34.03 C35.17 37.34 32.30 38.76 28.00 38.76 C24.42 38.76 20.83 37.81 20.83 35.16 M28.00 14.05 V19.84 M28.00 38.76 V44.55" fill="none" stroke="#141414" stroke-width="3.4" stroke-linecap="butt"/></svg>
<div class="b" style="left:3196.0px;top:1716.0px;width:30.0px;height:30.0px;background:#545454;border-radius:50%;"></div>
<div class="t" style="left:3196px;width:30px;top:1720.0px;font-size:20px;font-weight:bold;color:#8a8f8c;text-align:center;">0</div>
<div class="b" style="left:3266.0px;top:1666.5px;width:86.0px;height:86.0px;border:2px solid #666;border-radius:6px;"></div>
<div class="b" style="left:3306.2px;top:1697.8px;width:6.4px;height:6.4px;background:#141414;border-radius:50%;"></div>
<div class="b" style="left:3306.2px;top:1706.8px;width:6.4px;height:6.4px;background:#141414;border-radius:50%;"></div>
<div class="b" style="left:3306.2px;top:1715.8px;width:6.4px;height:6.4px;background:#141414;border-radius:50%;"></div>
<div class="b" style="left:584.0px;top:50.0px;width:1976.0px;height:1915.0px;background:#fff;border-radius:12px;"></div>
<div class="t" style="left:615.0px;top:89.2px;font-size:32px;color:#8a8c8f;font-weight:bold;">RFQ# / Bulk quote 09</div>
<div class="b" style="left:954.5px;top:85.5px;width:51.7px;height:40.6px;background:#d3ecdd;border-radius:21px;"></div>
<div class="b" style="left:956.0px;top:87.0px;width:48.7px;height:37.6px;background:#218250;border-radius:19px;"></div>
<svg class="b" style="left:971.0px;top:95.0px;width:20.0px;height:22.0px;" viewBox="0 0 20 22" preserveAspectRatio="none"><path d="M5.6 9.5 V6.3 a4.4 4.4 0 0 1 8.8 0 V9.5" fill="none" stroke="#fff" stroke-width="2.8"/><rect x="1" y="8.8" width="18" height="12.2" rx="2.6" fill="#fff"/></svg>
<div class="t" style="left:2232.6px;top:92.2px;font-size:28px;color:#212529;">English</div>
<div class="b" style="left:2232.0px;top:125.0px;width:214.0px;height:2.0px;background:#bdbdbd;"></div>
<svg class="b" style="left:2422.5px;top:97.5px;width:23.0px;height:15.0px;" viewBox="0 0 23 15" preserveAspectRatio="none"><polyline points="1.6,2.2 11.5,12 21.4,2.2" fill="none" stroke="#666" stroke-width="3.5"/></svg>
<svg class="b" style="left:2498.0px;top:94.0px;width:25.0px;height:24.0px;" viewBox="0 0 25 24" preserveAspectRatio="none"><path d="M2 1 L23 23 M23 1 L2 23" stroke="#8a8a8e" stroke-width="4.2"/></svg>
<div class="b" style="left:584.0px;top:162.0px;width:1976.0px;height:2.0px;background:#dee2e6;"></div>
<div class="b" style="left:617.0px;top:192.0px;width:938.0px;height:218.0px;border:2px solid #c8c8c8;border-radius:8px;"></div>
<div class="b" style="left:633.0px;top:190.0px;width:147.0px;height:6.0px;background:#fff;"></div>
<div class="t" style="left:650.0px;top:183.9px;font-size:20px;color:#212529;font-weight:bold;">CUSTOMER</div>
<div class="t" style="left:634.6px;top:238.6px;font-size:28px;color:#212529;font-weight:bold;">COM FACTORY SRL</div>
<div class="t" style="left:634.6px;top:298.6px;font-size:28px;color:#212529;"><span style="color:#8a8c8f">Person:</span> <b>John SMITH</b></div>
<div class="t" style="left:634.6px;top:358.6px;font-size:28px;color:#212529;"><span style="color:#8a8c8f">Email:</span></div>
<div class="t" style="left:728.0px;top:358.6px;font-size:28px;color:#2b6e4b;font-weight:bold;">stan@zoomfab.com</div>
<div class="b" style="left:1588.0px;top:192.0px;width:939.0px;height:218.0px;border:2px solid #c8c8c8;border-radius:8px;"></div>
<div class="b" style="left:1604.5px;top:190.0px;width:132.5px;height:6.0px;background:#fff;"></div>
<div class="t" style="left:1621.7px;top:183.9px;font-size:20px;color:#212529;font-weight:bold;">SUPPLIER</div>
<div class="t" style="left:1605.0px;top:238.6px;font-size:28px;color:#212529;font-weight:bold;">SHEETMETAL ONE MASTER</div>
<div class="t" style="left:1605.0px;top:298.6px;font-size:28px;color:#212529;"><span style="color:#8a8c8f">Person:</span> <b>Jakub Murko</b></div>
<div class="t" style="left:1605.0px;top:358.6px;font-size:28px;color:#212529;"><span style="color:#8a8c8f">Email:</span></div>
<div class="t" style="left:1697.7px;top:358.6px;font-size:28px;color:#2b6e4b;font-weight:bold;">jakub.murko@gmail.com</div>
<div class="t" style="left:2424.0px;top:455.6px;font-size:28px;color:#2b6e4b;font-weight:bold;"><u>Refresh</u></div>
<div class="t" style="left:650.0px;top:510.1px;font-size:24px;color:#212529;font-weight:bold;">#</div>
<div class="t" style="left:713.0px;top:510.1px;font-size:24px;color:#212529;font-weight:bold;">CUSTOMER PRODUCT CODE / REVISION</div>
<div class="t" style="left:1318.0px;top:510.1px;font-size:24px;color:#212529;font-weight:bold;">OUR PRODUCT CODE / REVISION / M. REV.</div>
<div class="t" style="left:1922.5px;top:510.1px;font-size:24px;color:#212529;font-weight:bold;">QUOTING STATUS</div>
<div class="b" style="left:618.0px;top:556.0px;width:1910.0px;height:2.0px;background:#bfc1c3;"></div>
<div class="t" style="left:635.0px;top:582.7px;font-size:28px;color:#212529;">001</div>
<div class="t" style="left:713.0px;top:582.7px;font-size:28px;color:#212529;">COM-FACT-SRL-09-1 / 1</div>
<div class="t" style="left:1318.0px;top:582.7px;font-size:28px;color:#212529;">COM-FACT-SRL-09-1 / 1 / 1</div>
<div class="t" style="left:1922.5px;top:582.7px;font-size:28px;color:#212529;">Include (preliminary</div>
<div class="b" style="left:618.0px;top:633.0px;width:1910.0px;height:2.0px;background:#dee2e6;"></div>
<div class="t" style="left:635.0px;top:657.7px;font-size:28px;color:#212529;">002</div>
<div class="t" style="left:713.0px;top:657.7px;font-size:28px;color:#212529;">COM-FACT-SRL-09-2 / 1</div>
<div class="t" style="left:1318.0px;top:657.7px;font-size:28px;color:#212529;">COM-FACT-SRL-09-2 / 1 / 1</div>
<div class="t" style="left:1922.5px;top:657.7px;font-size:28px;color:#212529;">Include</div>
<div class="b" style="left:618.0px;top:707.0px;width:1910.0px;height:2.0px;background:#dee2e6;"></div>
<div class="t" style="left:635.0px;top:731.7px;font-size:28px;color:#212529;">003</div>
<div class="t" style="left:713.0px;top:731.7px;font-size:28px;color:#212529;">COM-FACT-SRL-09-3 / 1</div>
<div class="t" style="left:1318.0px;top:731.7px;font-size:28px;color:#212529;">COM-FACT-SRL-09-3 / 1 / 1</div>
<div class="t" style="left:1922.5px;top:731.7px;font-size:28px;color:#212529;">Include</div>
<div class="b" style="left:618.0px;top:781.0px;width:1910.0px;height:2.0px;background:#dee2e6;"></div>
<div class="t" style="left:635.0px;top:805.7px;font-size:28px;color:#212529;">004</div>
<div class="t" style="left:713.0px;top:805.7px;font-size:28px;color:#212529;">COM-FACT-SRL-09-4 / 1</div>
<div class="t" style="left:1318.0px;top:805.7px;font-size:28px;color:#212529;">COM-FACT-SRL-09-4 / 1 / 1</div>
<div class="t" style="left:1922.5px;top:805.7px;font-size:28px;color:#212529;">Submitted (Quote # 4)</div>
<div class="b" style="left:618.0px;top:855.0px;width:1910.0px;height:2.0px;background:#dee2e6;"></div>
<div class="t" style="left:635.0px;top:879.7px;font-size:28px;color:#212529;">005</div>
<div class="t" style="left:713.0px;top:879.7px;font-size:28px;color:#212529;">COM-FACT-SRL-09-5 / 1</div>
<div class="t" style="left:1318.0px;top:879.7px;font-size:28px;color:#212529;">COM-FACT-SRL-09-5 / 1 / 1</div>
<div class="t" style="left:1922.5px;top:879.7px;font-size:28px;color:#212529;">Pending</div>
<div class="b" style="left:618.0px;top:929.0px;width:1910.0px;height:2.0px;background:#dee2e6;"></div>
<div class="b" style="left:2175.3px;top:576.0px;width:169.3px;height:39.6px;border:2px solid #a8a8a8;border-radius:20px;"></div>
<svg class="b" style="left:2182.0px;top:587.0px;width:24.0px;height:18.0px;" viewBox="0 0 24 18" preserveAspectRatio="none"><polyline points="2.5,8.5 9.5,15.7 22,2.2" fill="none" stroke="#212529" stroke-width="3" stroke-linecap="round"/></svg>
<div class="t" style="left:2213.0px;top:583.3px;font-size:24.5px;color:#212529;">Make final</div>
<div class="t" style="left:2355.0px;top:581.7px;font-size:28px;color:#212529;">)</div>
<div class="b" style="left:617.0px;top:971.0px;width:940.0px;height:746.0px;border:2px solid #d3d3d3;"></div>
<div class="b" style="left:619.0px;top:973.0px;width:936.0px;height:71.6px;background:#275339;"></div>
<div class="t" style="left:634.0px;top:995.7px;font-size:28px;color:#fff;">Comments</div>
<div class="t" style="left:649.0px;top:1081.2px;font-size:28px;color:#111;">10% discount was applied to part RFQ#9 as agreed</div>
<svg class="b" style="left:1508.0px;top:1670.0px;width:19.0px;height:18.0px;" viewBox="0 0 19 18" preserveAspectRatio="none"><path d="M3 14.6 L14.9 3.3 M10 15.8 L16 10.2" stroke="#555" stroke-width="1.8"/></svg>
<div class="b" style="left:1587.0px;top:971.0px;width:941.0px;height:746.0px;border:2px solid #d3d3d3;"></div>
<div class="b" style="left:1589.0px;top:973.0px;width:937.0px;height:71.6px;background:#275339;"></div>
<div class="t" style="left:1605.5px;top:995.7px;font-size:28px;color:#fff;">Terms and conditions</div>
<div class="t" style="left:1619.0px;top:1081.7px;font-size:28px;color:#8a8c8f;">Cash on delivery</div>
<div class="t" style="left:1619.0px;top:1161.7px;font-size:28px;color:#8a8c8f;">Payment term</div>
<div class="t" style="left:1619.0px;top:1241.7px;font-size:28px;color:#8a8c8f;">Calculated from</div>
<div class="t" style="left:1619.0px;top:1321.7px;font-size:28px;color:#8a8c8f;">Lead time</div>
<div class="t" style="left:1619.0px;top:1401.7px;font-size:28px;color:#8a8c8f;">Point of delivery</div>
<div class="t" style="left:1619.0px;top:1481.7px;font-size:28px;color:#8a8c8f;">Packing included</div>
<div class="t" style="left:1619.0px;top:1561.7px;font-size:28px;color:#8a8c8f;">Quote validity</div>
<div class="t" style="left:1619.0px;top:1641.7px;font-size:28px;color:#8a8c8f;">Terms document</div>
<div class="b" style="left:2053.5px;top:1081.5px;width:38.0px;height:38.0px;border:2.5px solid #444;background:#fff;"></div>
<div class="t" style="left:2053.0px;top:1161.2px;font-size:28px;color:#212529;">45</div>
<div class="b" style="left:2053.0px;top:1195.0px;width:358.0px;height:2.0px;background:#bdbdbd;"></div>
<div class="t" style="left:2426.6px;top:1162.0px;font-size:28px;color:#212529;">days</div>
<div class="t" style="left:2053.0px;top:1241.7px;font-size:28px;color:#212529;">Invoice date</div>
<div class="b" style="left:2053.0px;top:1274.5px;width:433.0px;height:2.0px;background:#bdbdbd;"></div>
<svg class="b" style="left:2462.0px;top:1248.0px;width:23.0px;height:15.0px;" viewBox="0 0 23 15" preserveAspectRatio="none"><polyline points="1.6,2.5 11.5,12.3 21.4,2.5" fill="none" stroke="#666" stroke-width="3.5"/></svg>
<div class="t" style="left:2053.0px;top:1321.2px;font-size:28px;color:#212529;">45</div>
<div class="b" style="left:2053.0px;top:1355.0px;width:358.0px;height:2.0px;background:#bdbdbd;"></div>
<div class="t" style="left:2426.6px;top:1322.0px;font-size:28px;color:#212529;">days</div>
<div class="t" style="left:2053.0px;top:1401.7px;font-size:28px;color:#212529;">EXW</div>
<div class="b" style="left:2053.0px;top:1434.5px;width:433.0px;height:2.0px;background:#bdbdbd;"></div>
<svg class="b" style="left:2462.0px;top:1408.0px;width:23.0px;height:15.0px;" viewBox="0 0 23 15" preserveAspectRatio="none"><polyline points="1.6,2.5 11.5,12.3 21.4,2.5" fill="none" stroke="#666" stroke-width="3.5"/></svg>
<div class="b" style="left:2053.5px;top:1481.0px;width:38.0px;height:38.0px;background:#2b7a4d;"></div>
<svg class="b" style="left:2058.0px;top:1490.0px;width:29.0px;height:21.0px;" viewBox="0 0 29 21" preserveAspectRatio="none"><polyline points="4,11 11,18 25,4" fill="none" stroke="#fff" stroke-width="3.6"/></svg>
<div class="t" style="left:2053.0px;top:1561.2px;font-size:28px;color:#212529;">30</div>
<div class="b" style="left:2053.0px;top:1595.0px;width:358.0px;height:2.0px;background:#bdbdbd;"></div>
<div class="t" style="left:2426.6px;top:1562.0px;font-size:28px;color:#212529;">days</div>
<div class="t" style="left:2053.5px;top:1651.2px;font-size:28px;color:#2b6e4b;">TermsAndConditions_…PDF</div>
<div class="b" style="left:2426.6px;top:1636.0px;width:59.0px;height:59.0px;border:2.5px solid #d0304f;border-radius:50%;"></div>
<svg class="b" style="left:2446.0px;top:1656.0px;width:20.0px;height:20.0px;" viewBox="0 0 20 20" preserveAspectRatio="none"><path d="M2.6 2.6 L17.4 17.4 M17.4 2.6 L2.6 17.4" stroke="#a3102e" stroke-width="3.2" stroke-linecap="round"/></svg>
<div class="b" style="left:584.0px;top:1777.0px;width:1976.0px;height:2.0px;background:#dee2e6;"></div>
<div class="b" style="left:616.0px;top:1831.5px;width:168.0px;height:81.0px;background:#d12a42;border-radius:6px;"></div>
<svg class="b" style="left:633.0px;top:1857.0px;width:26.0px;height:30.0px;" viewBox="0 0 26 30" preserveAspectRatio="none"><path d="M7.8 3 Q8.6 0.9 10.5 0.9 H15.3 Q17.2 0.9 18 3 Z" fill="#fff"/><rect x="0.9" y="2.7" width="24.5" height="3.3" rx="1.65" fill="#fff"/><path d="M2.5 7.8 H23.9 V26.2 a3 3 0 0 1 -3 3 H5.5 a3 3 0 0 1 -3 -3 Z" fill="#fff"/><rect x="7.2" y="11" width="1.65" height="14" rx="0.8" fill="#d12a42"/><rect x="12.3" y="11" width="1.65" height="14" rx="0.8" fill="#d12a42"/><rect x="17.4" y="11" width="1.65" height="14" rx="0.8" fill="#d12a42"/></svg>
<div class="t" style="left:666.6px;top:1856.8px;font-size:29px;color:#fff;">Discard</div>
<div class="b" style="left:1201.6px;top:1815.4px;width:430.2px;height:113.2px;border:2px solid #e2e2e2;border-radius:14px;"></div>
<div class="b" style="left:1372.0px;top:1813.4px;width:89.5px;height:6.0px;background:#fff;"></div>
<div class="t" style="left:1393.5px;top:1800.6px;font-size:24px;color:#212529;font-weight:bold;">PDF</div>
<div class="b" style="left:1219.0px;top:1832.6px;width:177.6px;height:77.7px;border:2px solid #999;border-radius:5px;"></div>
<svg class="b" style="left:1237.0px;top:1860.0px;width:32.0px;height:24.0px;" viewBox="0 0 32 24" preserveAspectRatio="none"><path d="M0.9 12 C4 6 9.5 0.2 16 0.2 C22.5 0.2 28 6 31.1 12 C28 18 22.5 23.7 16 23.7 C9.5 23.7 4 18 0.9 12 Z" fill="#212529"/><circle cx="16" cy="12" r="7.85" fill="#fff"/><circle cx="16" cy="12" r="4.9" fill="#212529"/><circle cx="12.9" cy="8.9" r="3" fill="#fff"/></svg>
<div class="t" style="left:1276.0px;top:1856.8px;font-size:29px;color:#212529;">Preview</div>
<div class="b" style="left:1413.0px;top:1832.6px;width:201.4px;height:77.7px;border:2px solid #999;border-radius:5px;"></div>
<svg class="b" style="left:1431.0px;top:1857.0px;width:30.0px;height:30.0px;" viewBox="0 0 30 30" preserveAspectRatio="none"><rect x="1" y="20.2" width="27.8" height="8.6" rx="4.3" fill="#212529"/><polyline points="6.9,13.6 15,21.8 23.1,13.6" fill="none" stroke="#fff" stroke-width="7" stroke-linecap="round" stroke-linejoin="round"/><path d="M15 1.6 V20 M6.9 13.6 L15 21.8 L23.1 13.6" fill="none" stroke="#212529" stroke-width="3.6" stroke-linecap="round" stroke-linejoin="round"/><circle cx="24.5" cy="24.5" r="1.5" fill="#fff"/></svg>
<div class="t" style="left:1468.0px;top:1856.8px;font-size:29px;color:#212529;">Download</div>
<div class="b" style="left:1653.3px;top:1832.6px;width:268.7px;height:78.2px;border:2px solid #999;border-radius:5px;"></div>
<svg class="b" style="left:1672.0px;top:1860.0px;width:25.0px;height:24.0px;" viewBox="0 0 25 24" preserveAspectRatio="none"><path d="M0 3 a3 3 0 0 1 3 -3 H17.5 L24.4 6.8 V21 a3 3 0 0 1 -3 3 H3 a3 3 0 0 1 -3 -3 Z" fill="#212529"/><rect x="3.4" y="3" width="14.4" height="7.2" rx="1.4" fill="#fff"/><circle cx="12.3" cy="17.3" r="3.6" fill="#fff"/></svg>
<div class="t" style="left:1704.3px;top:1857.4px;font-size:29px;color:#212529;">Save and close</div>
<div class="b" style="left:1942.5px;top:1815.0px;width:584.5px;height:114.0px;border:2px solid #e2e2e2;border-radius:14px;"></div>
<div class="b" style="left:2143.7px;top:1813.0px;width:182.3px;height:6.0px;background:#fff;"></div>
<div class="t" style="left:2163.4px;top:1800.8px;font-size:24px;color:#212529;font-weight:bold;">Finish quote</div>
<div class="b" style="left:1960.0px;top:1833.4px;width:257.5px;height:77.6px;background:#275339;border-radius:5px;"></div>
<svg class="b" style="left:1977.0px;top:1857.0px;width:30.0px;height:30.0px;" viewBox="0 0 30 30" preserveAspectRatio="none"><path d="M28.2 1.1 L0.9 16.6 L6.5 20.7 L18.8 11.1 L9.8 22.1 L11.1 29 L16.1 24.7 L24.4 27 Z" fill="#fff" stroke="#fff" stroke-width="0.8" stroke-linejoin="round"/></svg>
<div class="t" style="left:2014.0px;top:1857.4px;font-size:29px;color:#fff;">Send by email</div>
<div class="b" style="left:2234.0px;top:1833.4px;width:276.0px;height:77.6px;background:#275339;border-radius:5px;"></div>
<svg class="b" style="left:2250.0px;top:1860.0px;width:28.0px;height:24.0px;" viewBox="0 0 28 24" preserveAspectRatio="none"><polyline points="3.2,12 10.8,19.4 25.2,4.2" fill="none" stroke="#fff" stroke-width="3.4" stroke-linecap="round"/></svg>
<div class="t" style="left:2284.0px;top:1857.4px;font-size:29px;color:#fff;">Mark completed</div>
</body></html>
